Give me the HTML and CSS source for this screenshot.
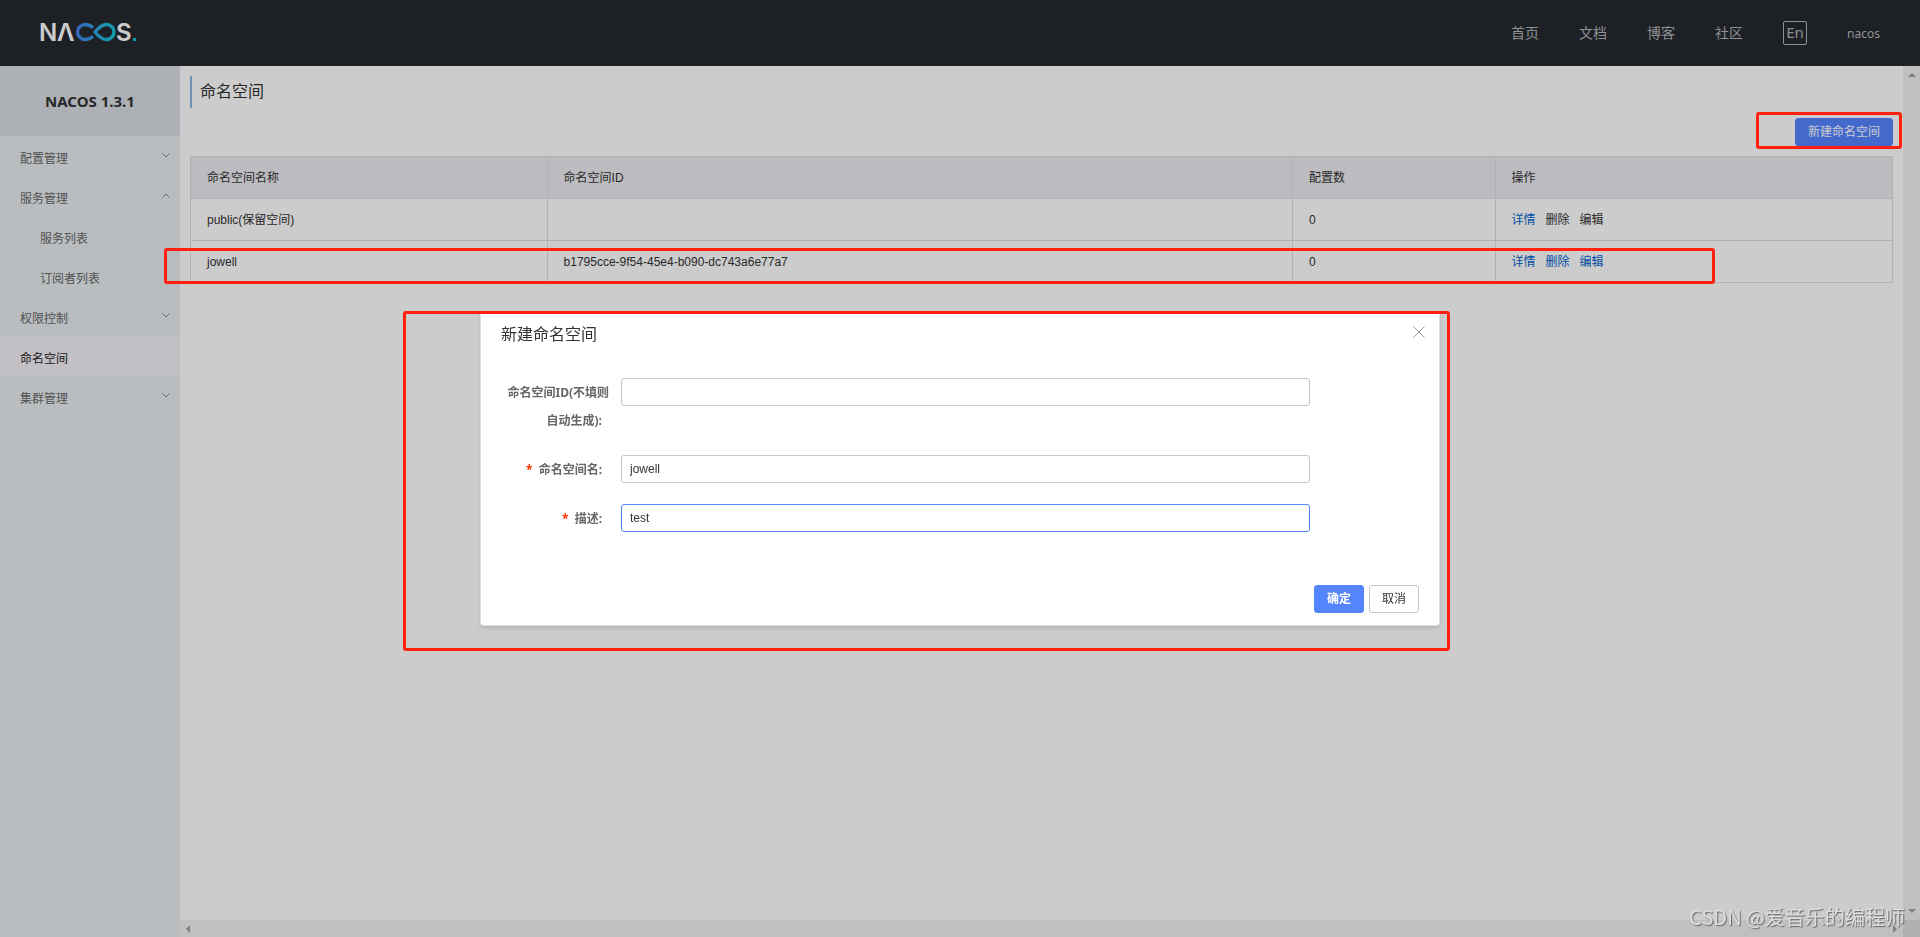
FILE: index.html
```html
<!DOCTYPE html>
<html lang="zh-CN">
<head>
<meta charset="utf-8">
<title>Nacos</title>
<link rel="stylesheet" href="styles.css">
</head>
<body>
<div class="app">
  <header class="topbar">
    <a class="logo" href="#" aria-label="NACOS">
      <svg width="100" height="40" viewBox="0 -8 100 40">
        <defs>
          <linearGradient id="loop" x1="36" y1="0" x2="76" y2="0" gradientUnits="userSpaceOnUse">
            <stop offset="0" stop-color="#4480e8"/>
            <stop offset="1" stop-color="#18c8d8"/>
          </linearGradient>
        </defs>
        <text class="logo-text" x="-1" y="20">N</text>
        <text class="logo-text" x="17" y="20">Λ</text>
        <path d="M53 6.500 C50 3.500 48 3.500 45 3.500 A7.500 7.500 0 0 0 45 18.500 C48 18.500 50 18 53 15.500" fill="none" stroke="url(#loop)" stroke-width="3.400"/>
        <path d="M55 11 C59 6 62 3.500 66.500 3.500 A7.500 7.500 0 0 1 66.500 18.500 C62 18.500 59 16 55 11 Z" fill="none" stroke="url(#loop)" stroke-width="3.400" stroke-linejoin="round"/>
        <text class="logo-text" x="76" y="20">S</text>
        <rect x="93" y="17" width="3" height="3" fill="#18c8d8"/>
      </svg>
    </a>
    <nav class="topnav">
      <a href="#">首页</a>
      <a href="#">文档</a>
      <a href="#">博客</a>
      <a href="#">社区</a>
      <button class="lang" type="button">En</button>
      <a class="user" href="#">nacos</a>
    </nav>
  </header>
  <div class="body">
    <aside class="sidebar">
      <h1 class="version">NACOS 1.3.1</h1>
      <nav class="menu">
        <a class="item" href="#">配置管理<svg class="chev" viewBox="0 0 8 5"><path d="M0.500 0.500 4 4 7.500 0.500"/></svg></a>
        <a class="item" href="#">服务管理<svg class="chev" viewBox="0 0 8 5"><path d="M0.500 4.500 4 1 7.500 4.500"/></svg></a>
        <a class="item sub" href="#">服务列表</a>
        <a class="item sub" href="#">订阅者列表</a>
        <a class="item" href="#">权限控制<svg class="chev" viewBox="0 0 8 5"><path d="M0.500 0.500 4 4 7.500 0.500"/></svg></a>
        <a class="item active" href="#">命名空间</a>
        <a class="item" href="#">集群管理<svg class="chev" viewBox="0 0 8 5"><path d="M0.500 0.500 4 4 7.500 0.500"/></svg></a>
      </nav>
    </aside>
    <div class="viewport">
      <main class="content">
        <h2 class="page-title">命名空间</h2>
        <div class="toolbar"><button class="btn primary" type="button">新建命名空间</button></div>
        <table class="grid">
          <colgroup><col class="c-name"><col class="c-id"><col class="c-count"><col></colgroup>
          <thead>
            <tr><th>命名空间名称</th><th>命名空间ID</th><th>配置数</th><th>操作</th></tr>
          </thead>
          <tbody>
            <tr><td>public(保留空间)</td><td></td><td>0</td>
              <td><div class="ops"><a href="#">详情</a><span>删除</span><span>编辑</span></div></td></tr>
            <tr><td>jowell</td><td>b1795cce-9f54-45e4-b090-dc743a6e77a7</td><td>0</td>
              <td><div class="ops"><a href="#">详情</a><a href="#">删除</a><a href="#">编辑</a></div></td></tr>
          </tbody>
        </table>
      </main>
      <div class="track vertical"><i class="arrow up"></i><i class="arrow down"></i></div>
      <div class="track horizontal"><i class="arrow left"></i><i class="arrow right"></i></div>
      <div class="corner"></div>
    </div>
  </div>
</div>

<div class="overlay">
  <form class="dialog" role="dialog" aria-labelledby="dlg-title">
    <div class="dialog-head">
      <h2 id="dlg-title">新建命名空间</h2>
      <button class="close" type="button" aria-label="关闭">
        <svg viewBox="0 0 12 12"><path d="M0.500 0.500 11.500 11.500M11.500 0.500 0.500 11.500"/></svg>
      </button>
    </div>
    <div class="fields">
      <div class="field">
        <label for="ns-id">命名空间ID(不填则<br><span class="colon">自动生成):</span></label>
        <input id="ns-id" type="text">
      </div>
      <div class="field">
        <label for="ns-name"><span class="req">*</span><span class="colon">命名空间名:</span></label>
        <input id="ns-name" type="text" value="jowell">
      </div>
      <div class="field">
        <label for="ns-desc"><span class="req">*</span><span class="colon">描述:</span></label>
        <input id="ns-desc" class="focused" type="text" value="test">
      </div>
    </div>
    <div class="dialog-foot">
      <button class="btn primary strong" type="submit">确定</button>
      <button class="btn" type="button">取消</button>
    </div>
  </form>
</div>

<div class="mark mark-create"></div>
<div class="mark mark-row"></div>
<div class="mark mark-dialog"></div>
<div class="watermark">CSDN @爱音乐的编程师</div>
<script src="main.js"></script>
</body>
</html>
```
FILE: main.js
```js
const desc = document.getElementById("ns-desc");
desc.focus();
desc.setSelectionRange(desc.value.length, desc.value.length);
```
FILE: styles.css
```css
* { box-sizing: border-box; }
body {
  margin: 0;
  font: 12px/18px "Liberation Sans", "Noto Sans CJK SC", sans-serif;
  color: #333;
  background: #fff;
  overflow: hidden;
}
a { color: inherit; text-decoration: none; }
h1, h2 { margin: 0; }
button, input { font: inherit; color: inherit; }

.app { display: flex; flex-direction: column; height: 100vh; }

.topbar {
  display: flex;
  align-items: center;
  justify-content: space-between;
  height: 66px;
  padding: 0 40px;
  background: #252a2f;
}
.logo { display: flex; }
.logo svg { overflow: visible; }
.logo-text { font: 600 24px "Inter", sans-serif; fill: #fff; }
.topnav {
  display: flex;
  align-items: center;
  gap: 40px;
  color: #b3b5b8;
  font-family: "Noto Sans", "Noto Sans CJK SC", sans-serif;
  font-size: 14px;
}
.lang {
  width: 24px;
  height: 24px;
  padding: 0 0 3px;
  border: 1px solid #b3b5b8;
  border-radius: 2px;
  background: none;
  font-size: 15px;
  line-height: 18px;
}
.user { padding-top: 2px; font-size: 12px; }

.body { display: flex; flex: 1; min-height: 0; }
.sidebar { width: 180px; background: #e8edf0; }
.version {
  height: 70px;
  background: #d9dde3;
  font: 700 15px/70px "Noto Sans", sans-serif;
  text-align: center;
}
.item {
  display: flex;
  align-items: center;
  justify-content: space-between;
  height: 40px;
  padding: 5px 10px 0 20px;
  color: #666;
}
.item.sub { padding-left: 40px; }
.item.active { background: #f3f1f7; color: #222; }
.chev { width: 8px; height: 5px; margin-bottom: 6px; overflow: visible; fill: none; stroke: #888; }

.viewport {
  flex: 1;
  min-width: 0;
  display: grid;
  grid-template-columns: 1fr 17px;
  grid-template-rows: 1fr 17px;
}
.content { padding: 10px; }
.page-title {
  padding-left: 8px;
  border-left: 2px solid #88b7e0;
  font-size: 16px;
  font-weight: 400;
  line-height: 32px;
}
.toolbar { display: flex; justify-content: flex-end; padding: 10px 0; }
.btn {
  height: 28px;
  padding: 0 12px;
  border: 1px solid #c4c6cf;
  border-radius: 3px;
  background: #fff;
  line-height: 26px;
}
.btn.primary { border-color: #5584ff; background: #5584ff; color: #fff; }
.btn.strong { font-weight: 600; }

.grid { width: 100%; table-layout: fixed; border-collapse: collapse; }
.c-name { width: 20.95%; }
.c-id { width: 43.8%; }
.c-count { width: 11.9%; }
.grid th, .grid td {
  height: 42px;
  padding: 0 16px;
  border: 1px solid #dcdee3;
  text-align: left;
  font-weight: 400;
}
.grid th { background: #ebecf0; }
.ops { display: flex; gap: 10px; }
.ops a { color: #0062cc; }

.track { display: flex; justify-content: space-between; align-items: center; background: #f1f1f1; }
.vertical { flex-direction: column; padding: 7px 0; }
.horizontal { padding: 0 6px; }
.corner { background: #dcdcdc; }
.arrow { border: 4px solid transparent; }
.up { border-top: 0; border-bottom-color: #a0a0a0; }
.down { border-bottom: 0; border-top-color: #a0a0a0; }
.left { border-left: 0; border-right-color: #a0a0a0; }
.right { border-right: 0; border-left-color: #a0a0a0; }

.overlay {
  position: fixed;
  inset: 0;
  display: flex;
  align-items: center;
  justify-content: center;
  background: rgba(0, 0, 0, 0.2);
}
.dialog {
  width: 50%;
  border: 1px solid #dcdee3;
  border-radius: 3px;
  background: #fff;
  box-shadow: 0 2px 4px rgba(0, 0, 0, 0.12);
}
.dialog-head {
  display: flex;
  align-items: flex-start;
  justify-content: space-between;
  padding: 12px 14px 16px 20px;
}
.dialog-head h2 { font-size: 16px; font-weight: 400; line-height: 22px; }
.close { display: flex; margin-top: 2px; padding: 0; border: 0; background: none; }
.close svg { width: 12px; height: 12px; fill: none; stroke: #999; }
.fields { display: flex; flex-direction: column; gap: 20px; padding: 16px 129px 52px 19px; }
.field { display: grid; grid-template-columns: 109px 1fr; column-gap: 12px; align-items: start; }
.field label {
  padding-top: 1px;
  color: #666;
  font-family: "Noto Sans", "Noto Sans CJK SC", sans-serif;
  font-weight: 700;
  line-height: 28px;
  text-align: right;
  white-space: nowrap;
}
.colon { padding-right: 7px; }
.req { margin-right: 6px; color: #ff3000; }
.field input {
  width: 100%;
  height: 28px;
  padding: 0 8px;
  border: 1px solid #c4c6cf;
  border-radius: 3px;
  outline: none;
}
.field .focused { border-color: #5584ff; }
.dialog-foot { display: flex; justify-content: flex-end; gap: 5px; padding: 0 20px 12px; }

.mark { position: fixed; border: 3px solid #ff2010; border-radius: 3px; pointer-events: none; }
.mark-create { top: 112px; right: 18px; width: 146px; height: 37px; }
.mark-row { top: 248px; left: 164px; right: 205px; height: 36px; }
.mark-dialog { top: 311px; left: 403px; right: 470px; height: 340px; }
.watermark {
  position: fixed;
  right: 15px;
  bottom: 6px;
  color: #dedede;
  font: 20px/28px "Noto Sans CJK SC", sans-serif;
  text-shadow: 1px 1px 1px #666;
}
```
